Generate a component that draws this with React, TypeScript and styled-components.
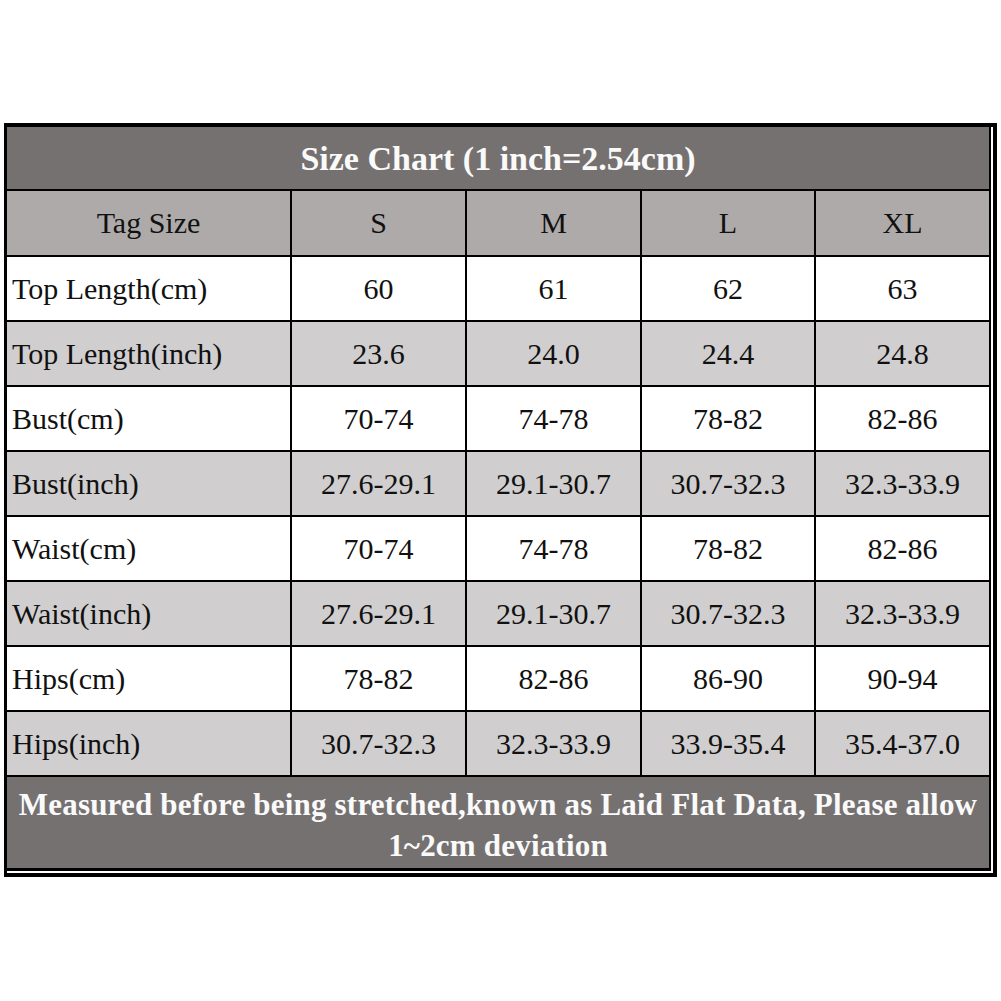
import React from "react";
import styled, { createGlobalStyle } from "styled-components";

const Global = createGlobalStyle`
  html, body { margin: 0; padding: 0; background: #ffffff; }
  body { font-family: "Liberation Serif", Tinos, "Times New Roman", serif; }
`;

const Page = styled.div`
  width: 1001px;
  height: 1001px;
  padding: 123px 0 0 4px;
  box-sizing: border-box;
  font-family: "Liberation Serif", Tinos, "Times New Roman", serif;
`;

const Frame = styled.div`
  display: inline-block;
  border-style: solid;
  border-color: #000;
  border-width: 4px 4px 4px 3px;
  padding: 0 2px 2px 0;
  background: #fff;
`;

const Grid = styled.div`
  display: grid;
  grid-template-columns: 283px 173px 173px 172px 173px;
  grid-template-rows: 62px 64px repeat(8, 63px) 91px;
  gap: 2px;
  background: #000;
  border-right: 2px solid #000;
  border-bottom: 3px solid #000;
`;

const Cell = styled.div<{ $bg: string; $left?: boolean }>`
  background: ${(p) => p.$bg};
  display: flex;
  align-items: center;
  justify-content: ${(p) => (p.$left ? "flex-start" : "center")};
  padding-left: ${(p) => (p.$left ? "5px" : "0")};
  font-size: 30px;
  color: #111;
  white-space: nowrap;
`;

const Title = styled.div`
  grid-column: 1 / -1;
  background: #767171;
  display: flex;
  align-items: center;
  justify-content: center;
  color: #fafafa;
  font-weight: bold;
  font-size: 34px;
  padding-top: 2px;
  box-sizing: border-box;
`;

const Footer = styled.div`
  grid-column: 1 / -1;
  background: #767171;
  color: #fafafa;
  font-weight: bold;
  font-size: 31px;
  letter-spacing: 0.2px;
  line-height: 41px;
  text-align: center;
  padding-top: 7px;
  box-sizing: border-box;
  white-space: nowrap;
`;

const header = ["Tag Size", "S", "M", "L", "XL"];
const rows: string[][] = [
  ["Top Length(cm)", "60", "61", "62", "63"],
  ["Top Length(inch)", "23.6", "24.0", "24.4", "24.8"],
  ["Bust(cm)", "70-74", "74-78", "78-82", "82-86"],
  ["Bust(inch)", "27.6-29.1", "29.1-30.7", "30.7-32.3", "32.3-33.9"],
  ["Waist(cm)", "70-74", "74-78", "78-82", "82-86"],
  ["Waist(inch)", "27.6-29.1", "29.1-30.7", "30.7-32.3", "32.3-33.9"],
  ["Hips(cm)", "78-82", "82-86", "86-90", "90-94"],
  ["Hips(inch)", "30.7-32.3", "32.3-33.9", "33.9-35.4", "35.4-37.0"],
];

export default function App() {
  return (
    <>
      <Global />
      <Page>
        <Frame>
          <Grid>
            <Title>Size Chart (1 inch=2.54cm)</Title>
            {header.map((h, i) => (
              <Cell key={"h" + i} $bg="#aeaaaa">
                {h}
              </Cell>
            ))}
            {rows.map((r, ri) =>
              r.map((v, ci) => (
                <Cell
                  key={ri + "-" + ci}
                  $bg={ri % 2 === 0 ? "#ffffff" : "#d0cece"}
                  $left={ci === 0}
                >
                  {v}
                </Cell>
              ))
            )}
            <Footer>
              Measured before being stretched,known as Laid Flat Data, Please allow
              <br />
              1~2cm deviation
            </Footer>
          </Grid>
        </Frame>
      </Page>
    </>
  );
}
